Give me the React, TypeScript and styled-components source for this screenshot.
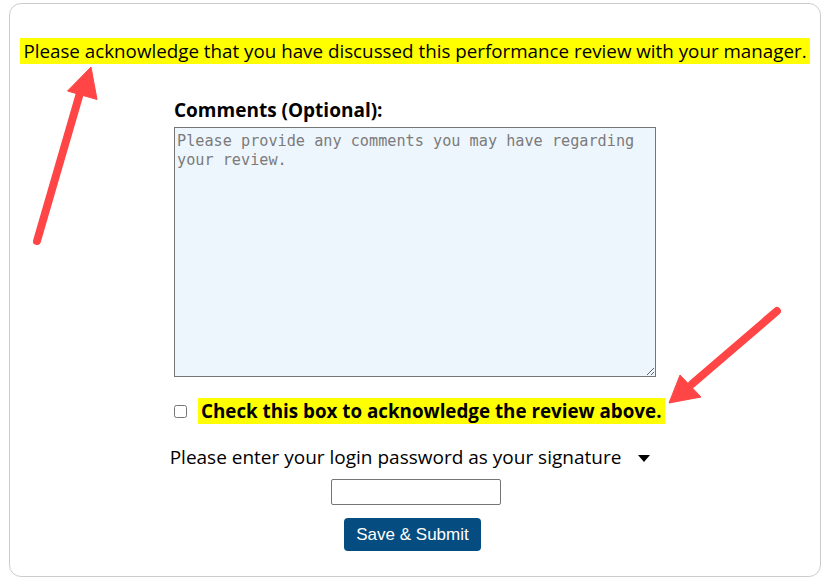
import React from "react";
import styled, { createGlobalStyle } from "styled-components";

const Global = createGlobalStyle`
  html, body { margin: 0; padding: 0; background: #ffffff; }
  body { font-family: "Open Sans", "Noto Sans", sans-serif; color: #000; }
`;

const Page = styled.div`
  width: 828px;
  height: 580px;
  padding: 3px 7px 3px 9px;
  box-sizing: border-box;
`;

const Card = styled.div`
  position: relative;
  height: 100%;
  box-sizing: border-box;
  border: 1px solid #cccccc;
  border-radius: 12px;
  padding-top: 37px;
  display: flex;
  flex-direction: column;
  align-items: center;
`;

const Notice = styled.p`
  margin: 0;
  text-align: center;
  font-size: 18.8px;
  line-height: 20px;
  white-space: nowrap;
`;

const Highlight = styled.span<{ $bold?: boolean }>`
  background: #ffff00;
  font-weight: ${(p) => (p.$bold ? 700 : 400)};
  padding: 0 3px;
`;

const Form = styled.div`
  width: 482px;
  margin-top: 37px;
  display: flex;
  flex-direction: column;
`;

const Label = styled.label`
  font-weight: 700;
  font-size: 19px;
  line-height: 24px;
  margin-bottom: 5px;
`;

const Comments = styled.textarea`
  width: 482px;
  height: 250px;
  box-sizing: border-box;
  background: #eef6fd;
  border: 1px solid #767676;
  border-radius: 0;
  padding: 4px 2px 2px;
  font-family: "DejaVu Sans Mono", "Liberation Mono", monospace;
  font-size: 15.2px;
  line-height: 19px;
  resize: both;
  &::placeholder { color: #7b7b7b; }
`;

const CheckRow = styled.div`
  display: flex;
  align-items: center;
  margin-top: 23px;
  white-space: nowrap;
`;

const Box = styled.input`
  width: 13px;
  height: 13px;
  margin: 0 11px 0 0;
`;

const CheckLabel = styled.label`
  font-size: 18.8px;
  line-height: 22px;
`;

const SignatureRow = styled.div`
  margin-top: 23px;
  display: flex;
  align-items: center;
  gap: 17px;
  font-size: 19px;
  line-height: 24px;
  margin-right: 10px;
  white-space: nowrap;
`;

const Caret = styled.span`
  width: 0;
  height: 0;
  border-left: 6px solid transparent;
  border-right: 6px solid transparent;
  border-top: 7px solid #000;
  margin-top: 2px;
`;

const Password = styled.input`
  margin-top: 10px;
  width: 170px;
  height: 26px;
  box-sizing: border-box;
  border: 1px solid #767676;
  border-radius: 2px;
  padding: 0 4px;
  margin-left: 1px;
`;

const Submit = styled.button`
  margin-top: 13px;
  margin-right: 5px;
  width: 137px;
  height: 33px;
  background: #054d80;
  color: #ffffff;
  border: none;
  border-radius: 4px;
  font-family: "Liberation Sans", Arial, sans-serif;
  font-size: 17px;
  cursor: pointer;
`;

const Annotations = styled.svg`
  position: absolute;
  left: -10px;
  top: -4px;
  width: 828px;
  height: 580px;
  pointer-events: none;
`;

export default function App() {
  return (
    <>
      <Global />
      <Page>
        <Card>
          <Notice>
            <Highlight>
              Please acknowledge that you have discussed this performance review with your manager.
            </Highlight>
          </Notice>
          <Form>
            <Label htmlFor="comments">Comments (Optional):</Label>
            <Comments
              id="comments"
              placeholder="Please provide any comments you may have regarding your review."
            />
            <CheckRow>
              <Box type="checkbox" id="ack" />
              <CheckLabel htmlFor="ack">
                <Highlight $bold>Check this box to acknowledge the review above.</Highlight>
              </CheckLabel>
            </CheckRow>
          </Form>
          <SignatureRow>
            <span>Please enter your login password as your signature</span>
            <Caret />
          </SignatureRow>
          <Password type="password" />
          <Submit>Save &amp; Submit</Submit>
          <Annotations viewBox="0 0 828 580">
            <g fill="#ff4545" stroke="#ff4545">
              <line x1="37" y1="241" x2="80" y2="93" strokeWidth="8" strokeLinecap="round" />
              <polygon points="91,67 67.5,91 97,99.5" strokeWidth="1" strokeLinejoin="round" />
              <line x1="777" y1="311" x2="692" y2="384" strokeWidth="8" strokeLinecap="round" />
              <polygon points="669,403 680,375 701,397" strokeWidth="1" strokeLinejoin="round" />
            </g>
          </Annotations>
        </Card>
      </Page>
    </>
  );
}
